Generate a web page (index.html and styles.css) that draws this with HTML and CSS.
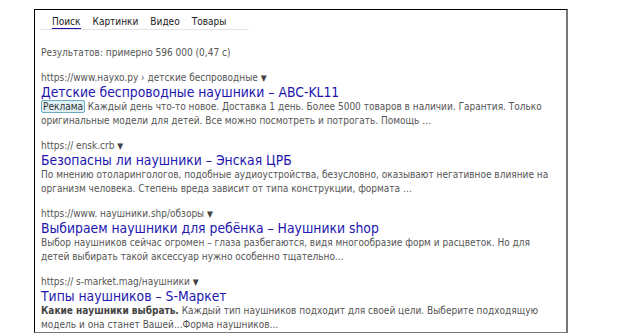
FILE: index.html
```html
<!DOCTYPE html>
<html lang="ru">
<head>
<meta charset="utf-8">
<link rel="stylesheet" href="styles.css">
</head>
<body>
<div class="frame">
  <nav class="tabs">
    <span class="tab active">Поиск</span>
    <span class="tab">Картинки</span>
    <span class="tab">Видео</span>
    <span class="tab">Товары</span>
  </nav>
  <div class="stats">Результатов: примерно 596 000 (0,47 с)</div>

  <div class="result">
    <div class="url">https://www.нayxo.py › детские беспроводные <span class="arrow">▼</span></div>
    <a class="title">Детские беспроводные наушники – ABC-KL11</a>
    <div class="snippet"><span class="ad">Реклама</span> Каждый день что-то новое. Доставка 1 день. Более 5000 товаров в наличии. Гарантия. Только<br>оригинальные модели для детей. Все можно посмотреть и потрогать. Помощь …</div>
  </div>

  <div class="result">
    <div class="url">https:// ensk.crb <span class="arrow">▼</span></div>
    <a class="title">Безопасны ли наушники – Энская ЦРБ</a>
    <div class="snippet">По мнению отоларингологов, подобные аудиоустройства, безусловно, оказывают негативное влияние на<br>организм человека. Степень вреда зависит от типа конструкции, формата …</div>
  </div>

  <div class="result">
    <div class="url">https://www. наушники.shp/обзоры <span class="arrow">▼</span></div>
    <a class="title">Выбираем наушники для ребёнка – Наушники shop</a>
    <div class="snippet">Выбор наушников сейчас огромен – глаза разбегаются, видя многообразие форм и расцветок. Но для<br>детей выбирать такой аксессуар нужно особенно тщательно...</div>
  </div>

  <div class="result">
    <div class="url">https:// s-market.mag/наушники <span class="arrow">▼</span></div>
    <a class="title">Типы наушников – S-Маркет</a>
    <div class="snippet"><b>Какие наушники выбрать.</b> Каждый тип наушников подходит для своей цели. Выберите подходящую<br>модель и она станет Вашей...Форма наушников...</div>
  </div>
</div>
</body>
</html>
```
FILE: styles.css
```css
html, body {
  margin: 0;
  padding: 0;
  background: #fff;
}
body {
  font-family: "DejaVu Sans Condensed", "DejaVu Sans", Verdana, sans-serif;
  font-stretch: condensed;
  font-size: 10px;
  color: #555;
}
.frame {
  margin: 9px 0 0 34px;
  border-top: 1px solid #000;
  border-left: 1px solid #000;
  border-right: 2px solid #777;
  border-bottom: 1px solid #777;
  padding: 0 0 0 6px;
  box-sizing: border-box;
  width: 534px;
  height: 324px;
  overflow: hidden;
}
.tabs {
  display: flex;
  gap: 12px;
  width: 208px;
  padding: 6px 0 0 11px;
  box-sizing: border-box;
  border-bottom: 1px solid #e2e2e2;
  height: 20px;
}
.tab {
  color: #222;
  font-size: 10px;
  line-height: 12px;
  height: 12px;
}
.tab.active {
  border-bottom: 1px solid #1a0dab;
}
.stats {
  margin-top: 17px;
  line-height: 12px;
}
.result {
  margin-top: 12px;
}
.result:first-of-type {
  margin-top: 19px;
}
.url {
  line-height: 13px;
}
.arrow {
  font-size: 8.5px;
  color: #444;
}
.title {
  display: block;
  color: #2215b0;
  font-size: 13.8px;
  line-height: 15px;
}
.snippet {
  line-height: 13.5px;
}
.ad {
  display: inline-block;
  background: #dff0f4;
  border: 1px solid #6fa9bd;
  border-radius: 2px;
  color: #333;
  line-height: 11px;
  padding: 0 1px;
}
.snippet b {
  color: #444;
}
```
